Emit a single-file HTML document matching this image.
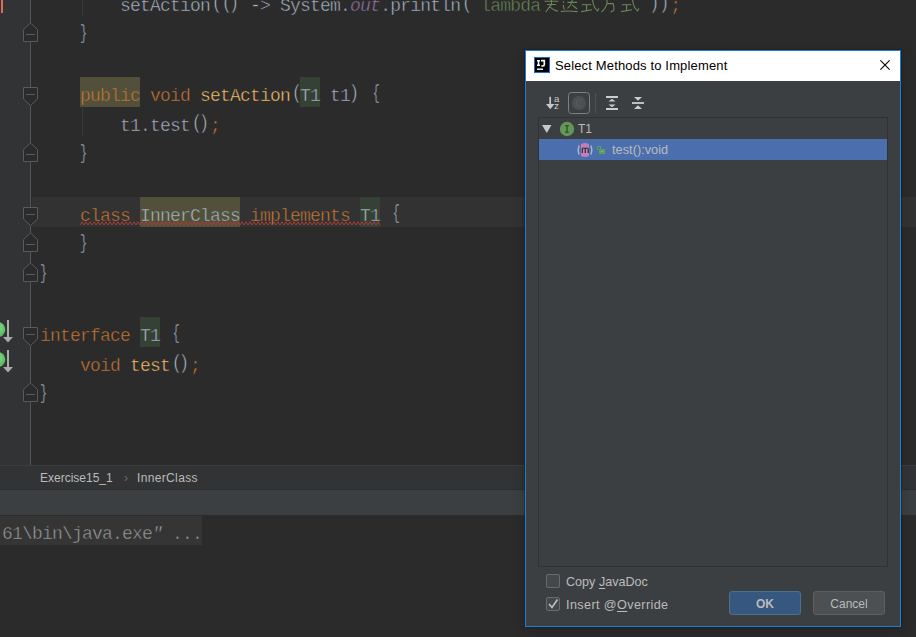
<!DOCTYPE html>
<html><head><meta charset="utf-8">
<style>
*{margin:0;padding:0;box-sizing:border-box}
html,body{width:916px;height:637px;overflow:hidden;background:#2b2b2b}
body{position:relative;font-family:"Liberation Sans",sans-serif}
.abs{position:absolute}
#gutter{left:0;top:0;width:31px;height:465px;background:#313335}
#caret{left:32px;top:197px;width:884px;height:30px;background:#323232}
.ln{position:absolute;left:0;height:30px;line-height:30px;white-space:pre;font-family:"Liberation Mono",monospace;font-size:18px;letter-spacing:-0.8px;color:#a9b7c6;-webkit-text-stroke:0.45px #2b2b2b}
.p{display:inline-block;transform:translateY(-2.5px) scaleY(1.06)}
.l{transform:translate(1.5px,-2.5px) scaleY(1.12)}
.r{transform:translate(-1.5px,-2.5px) scaleY(1.12)}
.b{transform:translateY(-2.5px) scale(0.68,1.1);transform-origin:0 50%}
.o{transform:translate(2.5px,-2.5px) scale(0.68,1.1)}
.k{color:#cc7832}
.m{color:#ffc66d}
.s{color:#6a8759}
.f{color:#9876aa;font-style:italic}
.w{background:#52503a}
.g{background:#344134}
#crumb{left:0;top:465px;width:916px;height:25px;background:#323335;border-top:1px solid #3b3c3e;border-bottom:1px solid #2e2e2e}
#tool{left:0;top:490px;width:916px;height:25px;background:#3c3f41}
#console{left:0;top:515px;width:916px;height:122px;background:#2b2b2b}
u{text-underline-offset:2px}
.ui{font-family:"Liberation Sans",sans-serif;font-size:12px;color:#bbbbbb;white-space:pre}
</style></head><body>
<div id="gutter" class="abs"></div>
<div id="caret" class="abs"></div>

<div class="abs" style="left:80px;top:77px;width:60px;height:30px;background:#52503a"></div>
<div class="abs" style="left:300px;top:77px;width:20px;height:30px;background:#344134"></div>
<div class="abs" style="left:140px;top:197px;width:100px;height:30px;background:#52503a"></div>
<div class="abs" style="left:360px;top:197px;width:20px;height:30px;background:#344134"></div>
<div class="abs" style="left:140px;top:317px;width:20px;height:30px;background:#344134"></div>
<svg class="abs" style="left:0;top:0" width="916" height="465"><defs><radialGradient id="gg" cx="0.55" cy="0.4" r="0.6"><stop offset="0" stop-color="#86d98d"/><stop offset="1" stop-color="#4fb356"/></radialGradient></defs><rect x="1" y="0" width="2" height="13" fill="#e0675a"/><path d="M30.5,0V465" stroke="#555555"/><path d="M23.5,87.5H37.5V99L30.5,105.5L23.5,99Z" fill="#2b2b2b" stroke="#5a5a5a"/><path d="M26,94.5H35" stroke="#5a5a5a"/><path d="M23.5,207.5H37.5V219L30.5,225.5L23.5,219Z" fill="#2b2b2b" stroke="#5a5a5a"/><path d="M26,214.5H35" stroke="#5a5a5a"/><path d="M23.5,327.5H37.5V339L30.5,345.5L23.5,339Z" fill="#2b2b2b" stroke="#5a5a5a"/><path d="M26,334.5H35" stroke="#5a5a5a"/><path d="M30.5,23L37.5,29.5V41.5H23.5V29.5Z" fill="#2b2b2b" stroke="#5a5a5a"/><path d="M26,34.5H35" stroke="#5a5a5a"/><path d="M30.5,143L37.5,149.5V161.5H23.5V149.5Z" fill="#2b2b2b" stroke="#5a5a5a"/><path d="M26,154.5H35" stroke="#5a5a5a"/><path d="M30.5,233L37.5,239.5V251.5H23.5V239.5Z" fill="#2b2b2b" stroke="#5a5a5a"/><path d="M26,244.5H35" stroke="#5a5a5a"/><path d="M30.5,263L37.5,269.5V281.5H23.5V269.5Z" fill="#2b2b2b" stroke="#5a5a5a"/><path d="M26,274.5H35" stroke="#5a5a5a"/><path d="M30.5,383L37.5,389.5V401.5H23.5V389.5Z" fill="#2b2b2b" stroke="#5a5a5a"/><path d="M26,394.5H35" stroke="#5a5a5a"/><path d="M82.5,0V17M82.5,107V137" stroke="#393939"/><circle cx="-2.4" cy="329.5" r="7.7" fill="url(#gg)"/><path d="M8,320V337.5" stroke="#ababab" stroke-width="2"/><path d="M3,336.9H13L8,342.5Z" fill="#ababab"/><circle cx="-2.4" cy="359.5" r="7.7" fill="url(#gg)"/><path d="M8,350V367.5" stroke="#ababab" stroke-width="2"/><path d="M3,366.9H13L8,372.5Z" fill="#ababab"/><path d="M80,225L82,221.8L84,225L86,221.8L88,225L90,221.8L92,225L94,221.8L96,225L98,221.8L100,225L102,221.8L104,225L106,221.8L108,225L110,221.8L112,225L114,221.8L116,225L118,221.8L120,225L122,221.8L124,225L126,221.8L128,225L130,221.8L132,225L134,221.8L136,225L138,221.8L140,225L142,221.8L144,225L146,221.8L148,225L150,221.8L152,225L154,221.8L156,225L158,221.8L160,225L162,221.8L164,225L166,221.8L168,225L170,221.8L172,225L174,221.8L176,225L178,221.8L180,225L182,221.8L184,225L186,221.8L188,225L190,221.8L192,225L194,221.8L196,225L198,221.8L200,225L202,221.8L204,225L206,221.8L208,225L210,221.8L212,225L214,221.8L216,225L218,221.8L220,225L222,221.8L224,225L226,221.8L228,225L230,221.8L232,225L234,221.8L236,225L238,221.8L240,225L242,221.8L244,225L246,221.8L248,225L250,221.8L252,225L254,221.8L256,225L258,221.8L260,225L262,221.8L264,225L266,221.8L268,225L270,221.8L272,225L274,221.8L276,225L278,221.8L280,225L282,221.8L284,225L286,221.8L288,225L290,221.8L292,225L294,221.8L296,225L298,221.8L300,225L302,221.8L304,225L306,221.8L308,225L310,221.8L312,225L314,221.8L316,225L318,221.8L320,225L322,221.8L324,225L326,221.8L328,225L330,221.8L332,225L334,221.8L336,225L338,221.8L340,225L342,221.8L344,225L346,221.8L348,225L350,221.8L352,225L354,221.8L356,225L358,221.8L360,225L362,221.8L364,225L366,221.8L368,225L370,221.8L372,225L374,221.8L376,225L378,221.8L380,225" fill="none" stroke="#a83c38" stroke-width="1"/></svg>
<svg class="abs" style="left:0;top:0" width="700" height="20"><path d="M544.6,1.2H558.4M551.5,0V5.5M545.8,12L551.8,3.6M549.4,6.6Q553,10 557.8,11.4M547,4.5H556M563,1.2L564,2.6M563,4.8L564.4,9.6M560.8,11.6Q566,10.5 577.6,11.6M567.4,2.4H577M572.2,0Q571,6 567.4,8.4M572.2,4.8L577,9M581.8,4.8H591.4M586.6,4.8V10.8M581.2,11.6L592,9.8M592.6,0Q593.5,8 597.6,11L598.8,8.2M601.6,12Q606,8 607,3.6M607,0V3.6M607,3.6H613.2Q614.5,9 613.6,10.6L610.6,12M621.8,4.8H631.4M626.6,4.8V10.8M621.2,11.6L632,9.8M632.6,0Q633.5,8 637.6,11L638.8,8.2" fill="none" stroke="#6a8759" stroke-width="1.1"/></svg>
<!-- code lines: line L top = -13 + 30L ; col0 x=40 -->
<div class="ln" style="top:-9px;left:120px">setAction<span class="p l">(</span><span class="p l">(</span><span class="p r">)</span> -&gt; System.<span class="f">out</span>.println<span class="p l">(</span><span class="s"> lambda           </span><span class="p r">)</span><span class="p r">)</span><span class="k">;</span></div>
<div class="ln" style="top:21px;left:80px"><span class="p b">}</span></div>
<div class="ln" style="top:81px;left:80px"><span class="k" style="-webkit-text-stroke-color:#52503a">public</span><span class="k"> void </span><span class="m">setAction</span><span class="p l">(</span><span style="-webkit-text-stroke-color:#344134">T1</span> t1<span class="p r">)</span> <span class="p b o">{</span></div>
<div class="ln" style="top:111px;left:120px">t1.test<span class="p l">(</span><span class="p r">)</span><span class="k">;</span></div>
<div class="ln" style="top:141px;left:80px"><span class="p b">}</span></div>
<div class="ln" style="top:201px;left:80px;-webkit-text-stroke-color:#323232"><span class="k">class </span><span style="-webkit-text-stroke-color:#52503a">InnerClass</span><span class="k"> implements </span><span style="-webkit-text-stroke-color:#344134">T1</span> <span class="p b o">{</span></div>
<div class="ln" style="top:231px;left:80px"><span class="p b">}</span></div>
<div class="ln" style="top:261px;left:40px"><span class="p b">}</span></div>
<div class="ln" style="top:321px;left:40px"><span class="k">interface </span><span style="-webkit-text-stroke-color:#344134">T1</span> <span class="p b o">{</span></div>
<div class="ln" style="top:351px;left:80px"><span class="k">void </span><span class="m">test</span><span class="p l">(</span><span class="p r">)</span><span class="k">;</span></div>
<div class="ln" style="top:381px;left:40px"><span class="p b">}</span></div>

<div id="crumb" class="abs"></div>
<div id="tool" class="abs"></div>
<div id="console" class="abs"></div>
<div class="abs" style="left:0;top:516px;width:202px;height:29px;background:#353535"></div>
<div class="ln" style="top:519px;left:-8px;color:#9c9c9c;-webkit-text-stroke-color:#353535"> 61\bin\java.exe<i>"</i> ...</div>
<div class="abs ui" style="left:40px;top:471px;line-height:15px">Exercise15_1</div>
<div class="abs ui" style="left:124px;top:471px;line-height:15px;color:#6e6e6e">›</div>
<div class="abs ui" style="left:137px;top:471px;line-height:15px;letter-spacing:0.35px">InnerClass</div>

<!-- dialog -->
<div class="abs" style="left:525px;top:50px;width:376px;height:577px;border:1px solid #1a80d8;background:#3c3f41;box-shadow:0 0 0 1px rgba(20,15,10,0.25),0 2px 12px rgba(0,0,0,0.22)"></div>
<div class="abs" style="left:526px;top:51px;width:374px;height:30px;background:#ffffff"></div>
<svg class="abs" style="left:534px;top:57px" width="16" height="16"><rect x="0.5" y="0.5" width="15" height="15" fill="#000" stroke="#1d6fd6"/><path d="M3,3.7H6M4.5,3.7V8.3M3,8.3H6" fill="none" stroke="#fff" stroke-width="1.5"/><path d="M7,3.7H11.2M10.3,3.7V7.6Q10.3,9 8.8,9H7.3" fill="none" stroke="#fff" stroke-width="1.7"/><path d="M3,12.2H9" stroke="#fff" stroke-width="1.4"/></svg>
<div class="abs ui" style="left:555px;top:58px;font-size:13px;letter-spacing:0.15px;line-height:15px;color:#000">Select Methods to Implement</div>
<svg class="abs" style="left:878px;top:58px" width="14" height="14"><path d="M2.4,2.4L11.6,11.6M11.6,2.4L2.4,11.6" stroke="#000" stroke-width="1.1"/></svg>
<!-- toolbar -->
<svg class="abs" style="left:540px;top:88px" width="120" height="30">
<path d="M10.2,8.8V17" stroke="#c7c7c7" stroke-width="1.7"/><path d="M6,16H14.5L10.25,21.2Z" fill="#c7c7c7"/>
<text x="13.9" y="14.3" font-family="Liberation Sans" font-size="9.6" fill="#c9c9c9">a</text>
<text x="14.1" y="21.4" font-family="Liberation Sans" font-size="9.8" fill="#c9c9c9">z</text>
<rect x="28.5" y="4.5" width="21" height="21" rx="3" fill="none" stroke="#7e7e7e"/>
<circle cx="39" cy="15" r="7" fill="#4e4f50"/><path d="M41.3,12.6Q40.4,11.6 39.1,11.6Q36.2,11.6 36.2,15Q36.2,18.4 39.1,18.4Q40.4,18.4 41.3,17.4" fill="none" stroke="#5c5d5e" stroke-width="1"/>
<path d="M55.5,5V25" stroke="#505050"/>
<path d="M66,9H78M66,21H78" stroke="#cdcdcd" stroke-width="1.8"/><path d="M68.5,13.5H75.5L72,10.8Z M68.5,16.5H75.5L72,19.2Z" fill="#cdcdcd"/>
<path d="M92,15H104" stroke="#cdcdcd" stroke-width="1.8"/><path d="M94,9H102L98,12.8Z M94,21H102L98,17.2Z" fill="#cdcdcd"/>
</svg>
<!-- tree -->
<div class="abs" style="left:538px;top:117px;width:350px;height:450px;border:1px solid #323232"></div>
<div class="abs" style="left:539px;top:139px;width:348px;height:21px;background:#4b6eaf"></div>
<svg class="abs" style="left:538px;top:118px" width="80" height="42">
<path d="M4,7H13.5L8.75,15Z" fill="#c8c8c8"/>
<circle cx="29" cy="11" r="7.2" fill="#629755"/>
<path d="M27.2,7.8H30.8M29,7.8V14.2M27.2,14.2H30.8" stroke="#2f3a2c" stroke-width="1.1"/>
<defs><clipPath id="mc"><rect x="42.9" y="24" width="8.2" height="16"/></clipPath></defs>
<path d="M41,27.5Q39.3,32 41,36.5M53,27.5Q54.7,32 53,36.5" fill="none" stroke="#a3b3cc" stroke-width="1.6"/>
<circle cx="47" cy="31.9" r="7" fill="#c17fb6" clip-path="url(#mc)"/>
<path d="M44.3,35V30.2M44.3,31Q44.6,30 45.8,30Q47.3,30 47.3,31.3V35M47.3,31Q47.6,30 48.8,30Q50.3,30 50.3,31.3V35" fill="none" stroke="#3b2c3a" stroke-width="1.2"/>
<path d="M59.5,32.2V28.5H62.5V31" fill="none" stroke="#5aa05c" stroke-width="1.2"/><rect x="61" y="31" width="6" height="5" fill="#5aa05c"/><path d="M63,33.5H65" stroke="#86b98a"/>
</svg>
<div class="abs ui" style="left:578px;top:122px;line-height:15px;font-size:12px">T1</div>
<div class="abs ui" style="left:612px;top:142px;line-height:15px;font-size:12.8px">test():void</div>
<!-- checkboxes -->
<div class="abs" style="left:546px;top:574px;width:14px;height:14px;border:1px solid #6b6b6b;background:#43494a;border-radius:2px"></div>
<div class="abs" style="left:546px;top:597px;width:14px;height:14px;border:1px solid #6b6b6b;background:#43494a;border-radius:2px"></div>
<svg class="abs" style="left:546px;top:597px" width="14" height="14"><path d="M3,7L6,10.5L11.5,2.5" fill="none" stroke="#c0c0c0" stroke-width="1.6"/></svg>
<div class="abs ui" style="left:566px;top:575px;line-height:15px;font-size:12.6px">Copy <u>J</u>avaDoc</div>
<div class="abs ui" style="left:566px;top:598px;line-height:15px;font-size:12.6px;letter-spacing:0.4px">Insert @<u>O</u>verride</div>
<div class="abs ui" style="left:729px;top:591px;width:72px;height:24px;line-height:22px;padding-top:1px;text-align:center;background:#365880;border:1px solid #4c708c;border-radius:3px;font-weight:bold">OK</div>
<div class="abs ui" style="left:813px;top:591px;width:72px;height:24px;line-height:22px;padding-top:1px;text-align:center;background:#4c5052;border:1px solid #5e6060;border-radius:3px">Cancel</div>
</body></html>
